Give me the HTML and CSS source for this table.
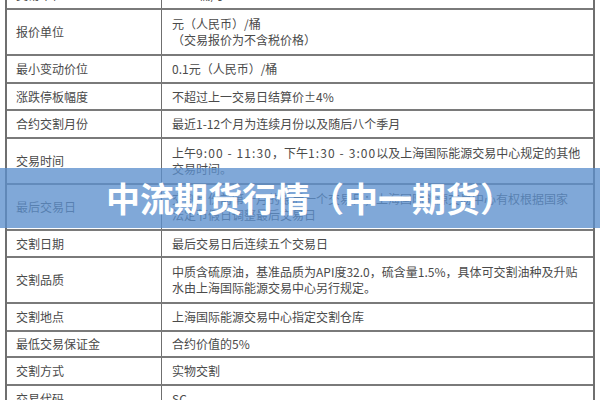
FILE: index.html
```html
<!DOCTYPE html>
<html lang="zh-CN">
<head>
<meta charset="utf-8">
<title>中流期货行情（中一期货）</title>
<link rel="stylesheet" href="styles.css">
</head>
<body>
<div class="page">
  <div class="spec">
    <div class="row r0"><div class="k">交易单位</div><div class="v"><div>1000桶/手</div></div></div>
    <div class="row r2l"><div class="k">报价单位</div><div class="v"><div>元（人民币）/桶<br>（交易报价为不含税价格）</div></div></div>
    <div class="row h28"><div class="k">最小变动价位</div><div class="v"><div>0.1元（人民币）/桶</div></div></div>
    <div class="row h27"><div class="k">涨跌停板幅度</div><div class="v"><div>不超过上一交易日结算价±4%</div></div></div>
    <div class="row h28"><div class="k">合约交割月份</div><div class="v"><div>最近1-12个月为连续月份以及随后八个季月</div></div></div>
    <div class="row r2l"><div class="k">交易时间</div><div class="v"><div>上午<span class="num">9:00 - 11:30</span>，下午<span class="num">1:30 - 3:00</span>以及上海国际能源交易中心规定的其他<br>交易时间。</div></div></div>
    <div class="row r2l"><div class="k">最后交易日</div><div class="v"><div>交割月份前第一月的最后一个交易日；上海国际能源交易中心有权根据国家<br>法定节假日调整最后交易日</div></div></div>
    <div class="row h27"><div class="k">交割日期</div><div class="v"><div>最后交易日后连续五个交易日</div></div></div>
    <div class="row r2l"><div class="k">交割品质</div><div class="v"><div>中质含硫原油，基准品质为API度32.0，硫含量1.5%，具体可交割油种及升贴<br>水由上海国际能源交易中心另行规定。</div></div></div>
    <div class="row h28"><div class="k">交割地点</div><div class="v"><div>上海国际能源交易中心指定交割仓库</div></div></div>
    <div class="row h26"><div class="k">最低交易保证金</div><div class="v"><div>合约价值的5%</div></div></div>
    <div class="row h28"><div class="k">交割方式</div><div class="v"><div>实物交割</div></div></div>
    <div class="row h28"><div class="k">交易代码</div><div class="v"><div>SC</div></div></div>
  </div>
  <div class="banner">中流期货行情（中一期货）</div>
</div>
</body>
</html>
```
FILE: styles.css
```css
* { box-sizing: border-box; }
html, body { margin: 0; padding: 0; background: #fff; }
body { width: 600px; height: 400px; overflow: hidden; }
.page { position: relative; width: 600px; height: 400px; overflow: hidden; }
.spec {
  margin-left: 5px;
  width: 590px;
  border-left: 2px solid #6f6f6f;
  border-right: 2px solid #6f6f6f;
  font-family: "Noto Sans CJK SC", "Noto Sans", sans-serif;
  font-size: 12px;
  line-height: 16px;
  color: #4a4a4a;
}
.row {
  display: grid;
  grid-template-columns: 155px 1fr;
  align-items: stretch;
  border-bottom: 2px solid #7a7a7a;
}
.k {
  display: flex;
  align-items: center;
  padding-left: 9px;
  border-right: 1px solid #6f6f6f;
}
.v {
  display: flex;
  align-items: center;
  padding-left: 10px;
  white-space: nowrap;
}
.num { letter-spacing: 1.1px; }
.r0 { height: 28px; margin-top: -18px; }
.r2l { height: 46px; }
.h28 { height: 28px; }
.h27 { height: 27px; }
.h26 { height: 26px; }
.banner {
  position: absolute;
  left: 0;
  top: 168px;
  width: 600px;
  height: 60px;
  background: rgba(92, 144, 205, 0.78);
  color: #fff;
  font-family: "Noto Sans CJK SC", "Noto Sans", sans-serif;
  font-weight: 700;
  font-size: 34px;
  line-height: 60px;
  text-align: center;
  padding-left: 20px;
  white-space: nowrap;
}
```
